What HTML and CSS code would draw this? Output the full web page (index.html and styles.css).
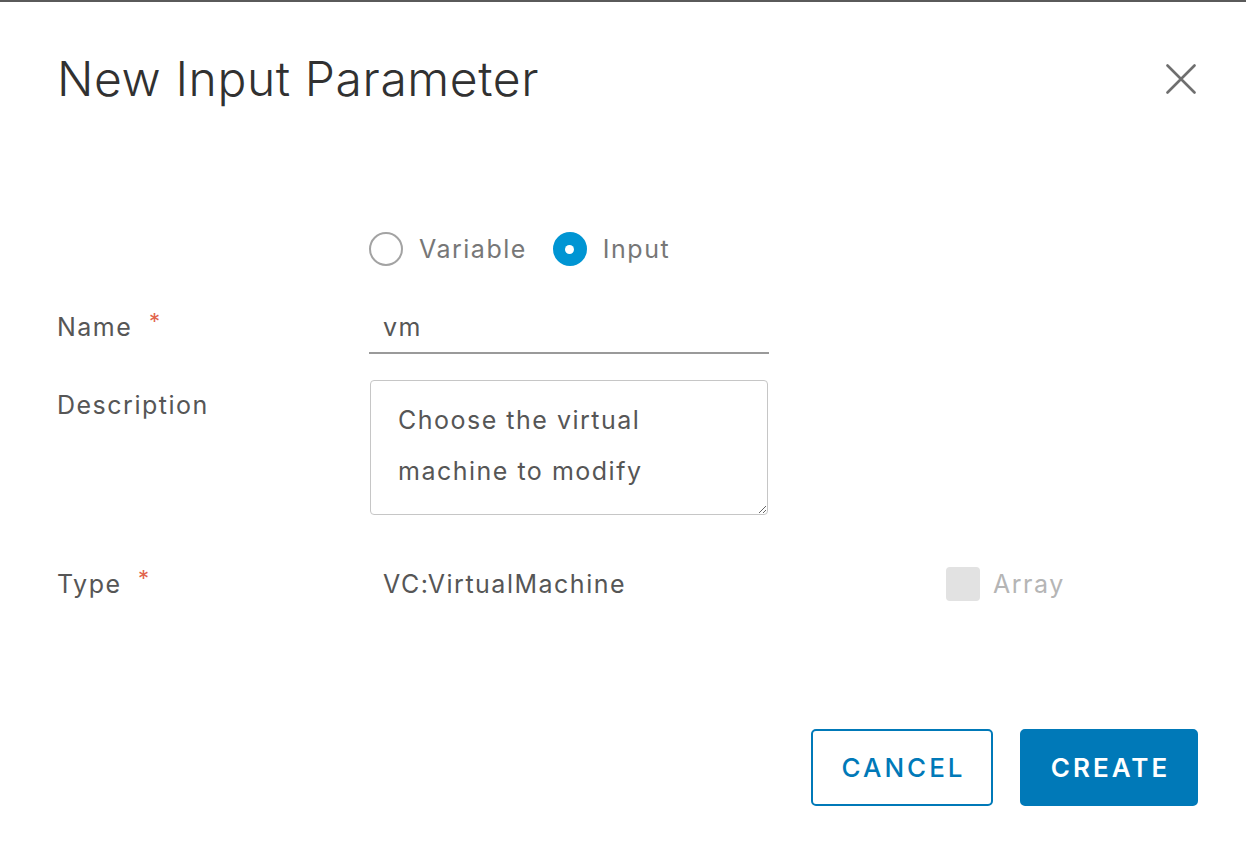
FILE: index.html
```html
<!DOCTYPE html>
<html lang="en">
<head>
<meta charset="utf-8">
<title>New Input Parameter</title>
<link rel="stylesheet" href="styles.css">
</head>
<body>
<div class="modal">
  <div class="modal-header">
    <h3 class="modal-title">New Input Parameter</h3>
    <button class="close" type="button" aria-label="Close">
      <svg viewBox="0 0 30 30" width="30" height="30">
        <path d="M1.5 1.5 L28.5 28.5 M28.5 1.5 L1.5 28.5" stroke="#6f6f6f" stroke-width="2.6" fill="none" stroke-linecap="round"/>
      </svg>
    </button>
  </div>
  <form class="modal-body">
    <div class="row radio-row">
      <div class="label"></div>
      <div class="control radios">
        <label class="radio"><span class="dot"></span>Variable</label>
        <label class="radio checked"><span class="dot"></span>Input</label>
      </div>
    </div>
    <div class="row name-row">
      <div class="label">Name <span class="req">*</span></div>
      <div class="control"><input class="text-input" type="text" value="vm"></div>
    </div>
    <div class="row desc-row">
      <div class="label">Description</div>
      <div class="control"><textarea class="textarea">Choose the virtual machine to modify</textarea></div>
    </div>
    <div class="row type-row">
      <div class="label">Type <span class="req">*</span></div>
      <div class="control type-value">VC:VirtualMachine</div>
      <label class="checkbox"><span class="box"></span>Array</label>
    </div>
  </form>
  <div class="modal-footer">
    <button class="btn btn-outline" type="button">CANCEL</button>
    <button class="btn btn-primary" type="button">CREATE</button>
  </div>
</div>
</body>
</html>
```
FILE: styles.css
```css
html, body {
  margin: 0;
  padding: 0;
  background: #fff;
}

body {
  font-family: "Inter", "Open Sans", sans-serif;
  color: #565656;
}

.modal {
  width: 1246px;
  height: 856px;
  box-sizing: border-box;
  border-top: 2px solid #5a5a5a;
  display: flex;
  flex-direction: column;
}

/* header */
.modal-header {
  display: flex;
  justify-content: space-between;
  align-items: center;
  padding: 46px 48px 0 57px;
  height: 62px;
}

.modal-title {
  margin: 0;
  font-weight: 300;
  font-size: 48px;
  line-height: 60px;
  color: #313131;
  letter-spacing: 0.6px;
}

.close {
  border: 0;
  background: none;
  padding: 0;
  width: 30px;
  height: 30px;
  margin-right: 2px;
  display: flex;
}

/* form */
.modal-body {
  padding: 119px 0 0 57px;
  margin: 0;
  display: flex;
  flex-direction: column;
  font-size: 25px;
  letter-spacing: 1.5px;
}

.row {
  display: flex;
  align-items: center;
}

.label {
  width: 312px;
  flex: none;
  color: #565656;
}

.req {
  color: #e1644c;
  margin-left: 8px;
  font-size: 22px;
  vertical-align: 7px;
}

.radio-row {
  height: 40px;
}

.radios {
  display: flex;
  gap: 26px;
  color: #777;
  font-size: 25px;
}

.radio {
  display: flex;
  align-items: center;
  gap: 16px;
}

.dot {
  width: 30px;
  height: 30px;
  border: 2px solid #a3a3a3;
  border-radius: 50%;
  box-sizing: content-box;
  position: relative;
}

.radio.checked .dot {
  border-color: #0095d3;
  background: #0095d3;
}

.radio.checked .dot::after {
  content: "";
  position: absolute;
  left: 50%;
  top: 50%;
  width: 9px;
  height: 9px;
  margin: -4.5px 0 0 -4.5px;
  border-radius: 50%;
  background: #fff;
}

.name-row {
  margin-top: 36px;
  height: 51px;
  align-items: flex-start;
}

.name-row .label {
  line-height: 32px;
}

.text-input {
  width: 400px;
  height: 49px;
  box-sizing: border-box;
  border: 0;
  border-bottom: 2px solid #9a9a9a;
  padding: 0 14px 4px;
  font: inherit;
  letter-spacing: 1.5px;
  color: #565656;
  outline: none;
  background: transparent;
}

.desc-row {
  margin-top: 24px;
  align-items: flex-start;
}

.desc-row .label {
  line-height: 50px;
}

.textarea {
  display: block;
  width: 398px;
  height: 135px;
  box-sizing: border-box;
  margin: 0 0 0 1px;
  padding: 14px 40px 0 27px;
  border: 1.5px solid #c6c6c6;
  border-radius: 4px;
  font: inherit;
  letter-spacing: 1.5px;
  line-height: 51px;
  color: #565656;
  outline: none;
  overflow: hidden;
}

.type-row {
  margin-top: 49px;
  height: 40px;
}

.type-row .label {
  line-height: 30px;
  padding-bottom: 7px;
}

.type-value {
  width: 563px;
  padding-left: 14px;
  color: #565656;
}

.checkbox {
  display: flex;
  align-items: center;
  gap: 13px;
  color: #b5b5b5;
}

.box {
  width: 34px;
  height: 34px;
  border-radius: 4px;
  background: #e2e2e2;
}

/* footer */
.modal-footer {
  margin-top: 125px;
  display: flex;
  justify-content: flex-end;
  gap: 27px;
  padding-right: 48px;
}

.btn {
  height: 77px;
  box-sizing: border-box;
  border-radius: 5px;
  font-family: "Inter", "Open Sans", sans-serif;
  font-size: 26px;
  letter-spacing: 3px;
  padding: 0 0 0 3px;
}

.btn-outline {
  width: 182px;
  border: 2px solid #0079b8;
  background: #fff;
  color: #0079b8;
  font-weight: 500;
}

.btn-primary {
  width: 178px;
  border: 2px solid #0079b8;
  background: #0079b8;
  color: #fff;
  font-weight: 600;
}
```
